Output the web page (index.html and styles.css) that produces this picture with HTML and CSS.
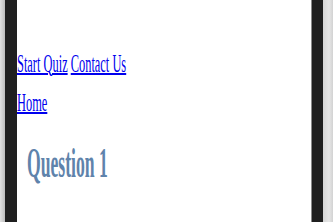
FILE: index.html
```html
<!DOCTYPE html>
<html>
<head>
<meta charset="utf-8">
<link rel="stylesheet" href="styles.css">
</head>
<body>
<div class="frame">
  <div class="edge-left"></div>
  <div class="bezel-left"></div>
  <main class="screen">
    <nav class="nav">
      <div class="nav-row"><a href="#">Start Quiz</a> <a href="#">Contact Us</a></div>
      <div class="nav-row"><a href="#">Home</a></div>
    </nav>
    <div class="title-wrap">
      <h1 class="title">Question 1</h1>
    </div>
  </main>
  <div class="bezel-right"></div>
  <div class="edge-right"></div>
</div>
</body>
</html>
```
FILE: styles.css
```css
html, body {
  margin: 0;
  padding: 0;
  height: 100%;
  overflow: hidden;
}
.frame {
  display: flex;
  height: 222px;
  width: 333px;
}
.edge-left {
  width: 5px;
  background: linear-gradient(to right, #e2e2e2, #bdbdbd);
}
.bezel-left {
  width: 12px;
  background: #1f1f1f;
}
.screen {
  flex: 1;
  background: #fff;
  border-right: 1px solid #8a8a8a;
  font-family: "Liberation Serif", serif;
  overflow: hidden;
}
.bezel-right {
  width: 11px;
  background: #1f1f1f;
}
.edge-right {
  width: 10px;
  background: linear-gradient(to right, #d6d6d6, #e6e6e6 60%, #d2d2d2);
}
.nav {
  padding-top: 51px;
}
.nav-row {
  height: 39px;
  font-size: 26px;
  line-height: 26px;
  transform: scaleX(0.477);
  transform-origin: left top;
  white-space: nowrap;
}
.nav-row a {
  color: #0000ee;
  text-decoration-thickness: 2px;
}
.title-wrap {
  padding-left: 10px;
  margin-top: 12px;
}
.title {
  margin: 0;
  font-size: 43px;
  line-height: 44px;
  font-weight: bold;
  color: #5f83ab;
  transform: scaleX(0.41);
  transform-origin: left top;
  white-space: nowrap;
}
```
